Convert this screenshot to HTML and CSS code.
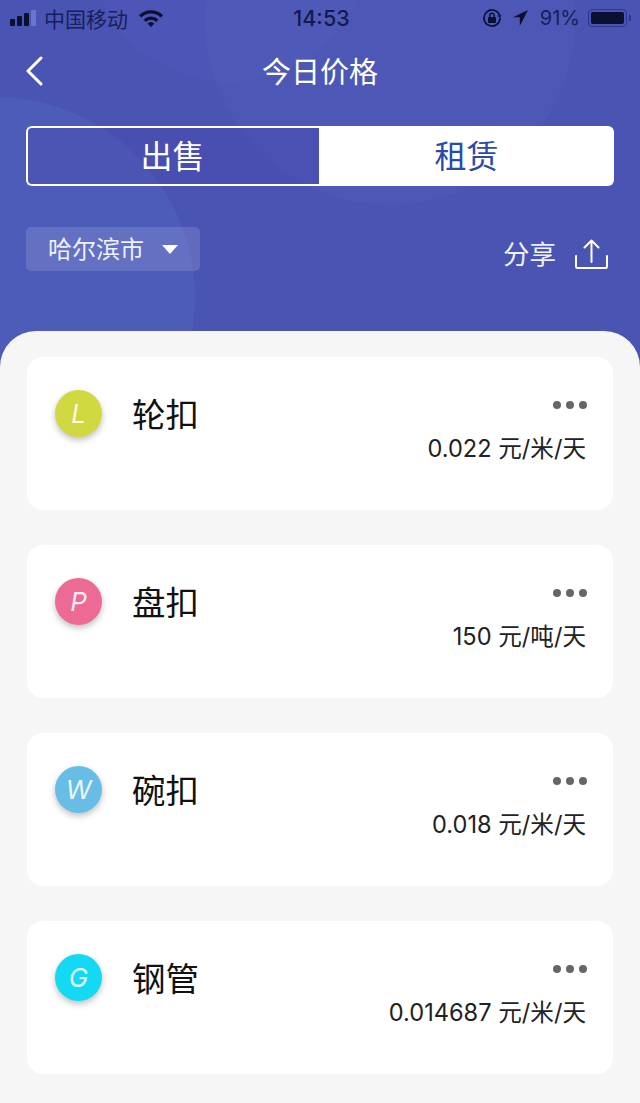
FILE: index.html
```html
<!DOCTYPE html>
<html>
<head>
<meta charset="UTF-8">
<title>今日价格</title>
<meta name="viewport" content="width=device-width, initial-scale=1.0">
<link rel="stylesheet" href="styles.css">
</head>

<body>

<div class="app">
  <div class="top">
    <div class="blob blob-a"></div>
    <div class="blob blob-b"></div>
    <div class="blob blob-c"></div>

    <div class="status">
      <div class="status-side">
        <div class="signal"><i></i><i></i><i></i><i class="off"></i></div>
        <span class="carrier">中国移动</span>
        <svg class="wifi" width="26" height="18" viewBox="0 0 26 18">
          <path d="M1 6.2a17 17 0 0 1 24 0l-2.3 2.4a13.8 13.8 0 0 0-19.4 0z" fill="#0b1030"/>
          <path d="M5.6 10.6a10.6 10.6 0 0 1 14.8 0l-2.3 2.3a7.4 7.4 0 0 0-10.2 0z" fill="#0b1030"/>
          <path d="M9.6 14.5a5 5 0 0 1 6.8 0L13 18z" fill="#0b1030"/>
        </svg>
      </div>
      <span class="clock">14:53</span>
      <div class="status-side status-right">
        <svg width="20" height="20" viewBox="0 0 20 20" fill="none">
          <path d="M17.600 7.500A8 8 0 1 0 18 10" stroke="#0b1030" stroke-width="1.700"/>
          <path d="M15.400 7.200h4.200l-2 2.800z" fill="#0b1030"/>
          <rect x="6" y="9" width="8" height="6" rx="1" fill="#0b1030"/>
          <path d="M7.800 9V7.400a2.200 2.200 0 0 1 4.400 0V9" stroke="#0b1030" stroke-width="1.400"/>
        </svg>
        <svg class="arrow" width="15" height="16" viewBox="0 0 15 16">
          <path d="M15 0 0 7.200h6.800V16z" fill="#0b1030"/>
        </svg>
        <span class="percent">91%</span>
        <div class="battery"><div class="battery-fill"></div></div>
        <div class="battery-tip"></div>
      </div>
    </div>

    <div class="title-bar">
      <svg class="back" width="20" height="30" viewBox="0 0 20 30" fill="none">
        <path d="M16 2 3 15l13 13" stroke="#fff" stroke-width="3" stroke-linecap="round" stroke-linejoin="round"/>
      </svg>
      <h1>今日价格</h1>
    </div>

    <div class="tabs">
      <div class="tab tab-on">出售</div>
      <div class="tab tab-off">租赁</div>
    </div>

    <div class="tools">
      <div class="city">
        <span>哈尔滨市</span>
        <div class="caret"></div>
      </div>
      <div class="share">
        <span>分享</span>
        <svg width="33" height="30" viewBox="0 0 33 30" fill="none">
          <path d="M1 17v10.500a1.500 1.500 0 0 0 1.500 1.500h28a1.500 1.500 0 0 0 1.500-1.500V17" stroke="#fff" stroke-width="2" stroke-linecap="round"/>
          <path d="M16.500 23V1.500M9.500 8.500l7-7 7 7" stroke="#fff" stroke-width="2" stroke-linecap="round" stroke-linejoin="round"/>
        </svg>
      </div>
    </div>
  </div>

  <div class="sheet">
    <div class="card">
      <div class="avatar lime">L</div>
      <div class="name">轮扣</div>
      <div class="card-right">
        <div class="dots"><i></i><i></i><i></i></div>
        <div class="price">0.022 元/米/天</div>
      </div>
    </div>
    <div class="card">
      <div class="avatar pink">P</div>
      <div class="name">盘扣</div>
      <div class="card-right">
        <div class="dots"><i></i><i></i><i></i></div>
        <div class="price">150 元/吨/天</div>
      </div>
    </div>
    <div class="card">
      <div class="avatar blue">W</div>
      <div class="name">碗扣</div>
      <div class="card-right">
        <div class="dots"><i></i><i></i><i></i></div>
        <div class="price">0.018 元/米/天</div>
      </div>
    </div>
    <div class="card">
      <div class="avatar cyan">G</div>
      <div class="name">钢管</div>
      <div class="card-right">
        <div class="dots"><i></i><i></i><i></i></div>
        <div class="price">0.014687 元/米/天</div>
      </div>
    </div>
  </div>
</div>

</body>
</html>
```

FILE: styles.css
```css
html,body{margin:0;height:100%}
body{font-family:Inter,"Noto Sans CJK SC",sans-serif;background:#f6f6f6}
.app{width:640px;height:1103px;overflow:hidden;background:#f6f6f6}

.top{position:relative;height:367px;background:#4a54b3;overflow:hidden;color:#fff}
.blob{position:absolute;border-radius:50%}
.blob-a{width:370px;height:370px;left:205px;top:-165px;background:rgba(110,115,215,.1)}
.blob-b{width:400px;height:400px;left:-205px;top:97px;background:rgba(90,115,205,.25)}
.blob-c{width:284px;height:284px;left:88px;top:-202px;background:rgba(110,115,215,.08)}

.status{position:relative;display:flex;justify-content:space-between;align-items:center;height:36px;padding:0 9px 0 10px;color:#0b1030;font-size:21px}
.status-side{display:flex;align-items:center;width:190px}
.status-right{justify-content:flex-end}
.signal{display:flex;align-items:flex-end;gap:2px;height:16px;margin-right:8px}
.signal i{display:block;width:5px;background:#0b1030;border-radius:1px}
.signal i:nth-child(1){height:7px}
.signal i:nth-child(2){height:10px}
.signal i:nth-child(3){height:13px}
.signal i:nth-child(4){height:16px}
.signal i.off{background:#6a76cc}
.carrier{color:#171f5c}
.wifi{margin-left:10px}
.clock{margin-left:2px;font-size:21.5px;font-weight:500;color:#141a50}
.arrow{margin-left:11px}
.percent{margin-left:12px;font-size:20px;color:#171f5c}
.battery{width:39px;height:18px;margin-left:8px;padding:2px;box-sizing:border-box;border:1px solid #2d3688;border-radius:4px}
.battery-fill{height:100%;background:#0b1030;border-radius:2px}
.battery-tip{width:2px;height:6px;margin-left:2px;background:#2d3688}

.title-bar{position:relative;display:flex;justify-content:center;align-items:center;height:68px}
.title-bar h1{margin:0;font-size:29px;font-weight:400}
.back{position:absolute;left:25px;top:20px}

.tabs{position:relative;display:flex;margin:22px 26px 0;height:60px}
.tab{flex:1;display:flex;align-items:center;justify-content:center;padding-bottom:4px;font-size:32px;box-sizing:border-box}
.tab-on{flex:0 0 293px;padding-right:2px;background:rgba(70,70,170,.3);border:2px solid #fff;border-right:0;border-radius:6px 0 0 6px}
.tab-off{background:#fff;color:#2a4ca6;border-radius:0 6px 6px 0}

.tools{position:relative;display:flex;justify-content:space-between;align-items:flex-start;margin:41px 26px 0}
.city{display:flex;align-items:center;width:174px;height:44px;padding:0 0 3px 22px;box-sizing:border-box;background:rgba(255,255,255,.13);border-radius:5px;font-size:24px;color:#eef0fb}
.caret{width:0;height:0;margin:3px 0 0 18px;border-left:8px solid transparent;border-right:8px solid transparent;border-top:9px solid #fff}
.share{display:flex;align-items:center;gap:19px;height:30px;margin:12px 6px 0 0;line-height:30px;font-size:26.5px;color:#eef0fb}

.sheet{position:relative;margin-top:-36px;padding:26px 27px 0;background:#f6f6f6;border-radius:36px 36px 0 0;display:flex;flex-direction:column;gap:35px}
.card{display:flex;height:153px;padding:0 27px 0 28px;box-sizing:border-box;background:#fff;border-radius:16px}
.avatar{width:47px;height:47px;margin-top:33px;border-radius:50%;display:flex;align-items:center;justify-content:center;color:rgba(255,255,255,.88);font-size:26px;font-style:italic;box-shadow:0 3px 6px rgba(0,0,0,.25)}
.lime{background:#d0d93f}
.pink{background:#ec6a94}
.blue{background:#68bde6}
.cyan{background:#13d9f2}
.name{margin:36px 0 0 30px;font-size:33.5px;line-height:44px;color:#111}
.card-right{margin-left:auto;text-align:right}
.dots{display:flex;justify-content:flex-end;gap:5px;margin:44px -1px 0 0}
.dots i{display:block;width:8px;height:8px;background:#666;border-radius:50%}
.price{margin-top:24px;font-size:23.6px;line-height:32px;color:#222}
```
